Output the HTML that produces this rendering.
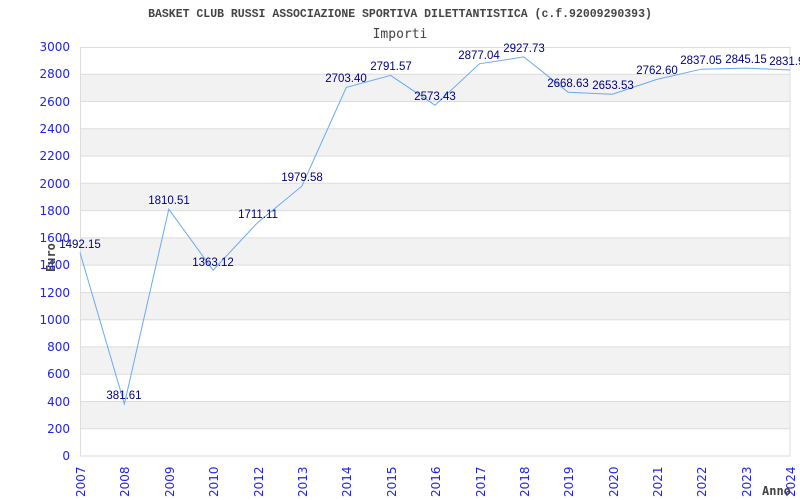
<!DOCTYPE html>
<html><head><meta charset="utf-8"><style>
html,body{margin:0;padding:0;background:#fff;width:800px;height:500px;overflow:hidden}
svg text{font-family:"DejaVu Sans","Liberation Sans",sans-serif}
svg text.d{font-family:"Liberation Sans",sans-serif;font-size:11.5px}
</style></head><body>
<svg width="800" height="500" xmlns="http://www.w3.org/2000/svg">
<text x="400" y="17" text-anchor="middle" style="font-family:'Liberation Mono','DejaVu Sans Mono',monospace;font-weight:bold;font-size:11.5px" fill="#444">BASKET CLUB RUSSI ASSOCIAZIONE SPORTIVA DILETTANTISTICA (c.f.92009290393)</text>
<text x="400" y="38" text-anchor="middle" style="font-family:'DejaVu Sans Mono','Liberation Mono',monospace;font-size:13px" fill="#444">Importi</text>
<g fill="#f2f2f2">
<rect x="80" y="74.3" width="710" height="27.3"/>
<rect x="80" y="128.8" width="710" height="27.3"/>
<rect x="80" y="183.3" width="710" height="27.3"/>
<rect x="80" y="237.9" width="710" height="27.3"/>
<rect x="80" y="292.4" width="710" height="27.3"/>
<rect x="80" y="346.9" width="710" height="27.3"/>
<rect x="80" y="401.5" width="710" height="27.3"/>
</g>
<g stroke="#ddd" stroke-width="1">
<path d="M80 74.3H790M80 101.5H790M80 128.8H790M80 156.1H790M80 183.3H790M80 210.6H790M80 237.9H790M80 265.1H790M80 292.4H790M80 319.7H790M80 346.9H790M80 374.2H790M80 401.5H790M80 428.7H790"/>
<rect x="80.5" y="47.5" width="709.5" height="408.5" fill="none"/>
</g>
<g fill="#2222ee" font-size="12" text-anchor="end">
<text x="70" y="51">3000</text><text x="70" y="78">2800</text><text x="70" y="106">2600</text><text x="70" y="133">2400</text><text x="70" y="160">2200</text><text x="70" y="188">2000</text><text x="70" y="215">1800</text><text x="70" y="242">1600</text><text x="70" y="269">1400</text><text x="70" y="297">1200</text><text x="70" y="324">1000</text><text x="70" y="351">800</text><text x="70" y="378">600</text><text x="70" y="406">400</text><text x="70" y="433">200</text><text x="70" y="460">0</text>
</g>
<g fill="#2222ee" font-size="12">
<text transform="translate(85,497) rotate(-90)">2007</text>
<text transform="translate(129,497) rotate(-90)">2008</text>
<text transform="translate(174,497) rotate(-90)">2009</text>
<text transform="translate(218,497) rotate(-90)">2010</text>
<text transform="translate(263,497) rotate(-90)">2012</text>
<text transform="translate(307,497) rotate(-90)">2013</text>
<text transform="translate(351,497) rotate(-90)">2014</text>
<text transform="translate(396,497) rotate(-90)">2015</text>
<text transform="translate(440,497) rotate(-90)">2016</text>
<text transform="translate(485,497) rotate(-90)">2017</text>
<text transform="translate(529,497) rotate(-90)">2018</text>
<text transform="translate(573,497) rotate(-90)">2019</text>
<text transform="translate(618,497) rotate(-90)">2020</text>
<text transform="translate(662,497) rotate(-90)">2021</text>
<text transform="translate(706,497) rotate(-90)">2022</text>
<text transform="translate(751,497) rotate(-90)">2023</text>
<text transform="translate(795,497) rotate(-90)">2024</text>
</g>
<text x="762" y="495" style="font-family:'DejaVu Sans Mono','Liberation Mono',monospace;font-weight:bold;font-size:12px" fill="#444">Anno</text>
<text transform="translate(55,272) rotate(-90)" style="font-family:'DejaVu Sans Mono','Liberation Mono',monospace;font-weight:bold;font-size:12px" fill="#444">Euro</text>
<polyline fill="none" stroke="#6aaaf0" stroke-width="1" points="80,252.6 124.4,404 168.8,209.2 213.1,270.2 257.5,222.7 301.9,186.1 346.3,87.4 390.6,75.4 435,105.2 479.4,63.8 523.8,56.9 568.1,92.2 612.5,94.2 656.9,79.4 701.3,69.2 745.6,68.1 790,70"/>
<g fill="#000080" text-anchor="middle">
<text class="d" x="80" y="248">1492.15</text>
<text class="d" x="124" y="399">381.61</text>
<text class="d" x="169" y="204">1810.51</text>
<text class="d" x="213" y="266">1363.12</text>
<text class="d" x="258" y="218">1711.11</text>
<text class="d" x="302" y="181">1979.58</text>
<text class="d" x="346" y="82">2703.40</text>
<text class="d" x="391" y="70">2791.57</text>
<text class="d" x="435" y="100">2573.43</text>
<text class="d" x="479" y="59">2877.04</text>
<text class="d" x="524" y="52">2927.73</text>
<text class="d" x="568" y="87">2668.63</text>
<text class="d" x="613" y="89">2653.53</text>
<text class="d" x="657" y="74">2762.60</text>
<text class="d" x="701" y="64">2837.05</text>
<text class="d" x="746" y="63">2845.15</text>
<text class="d" x="790" y="65">2831.96</text>
</g>
</svg>
</body></html>
